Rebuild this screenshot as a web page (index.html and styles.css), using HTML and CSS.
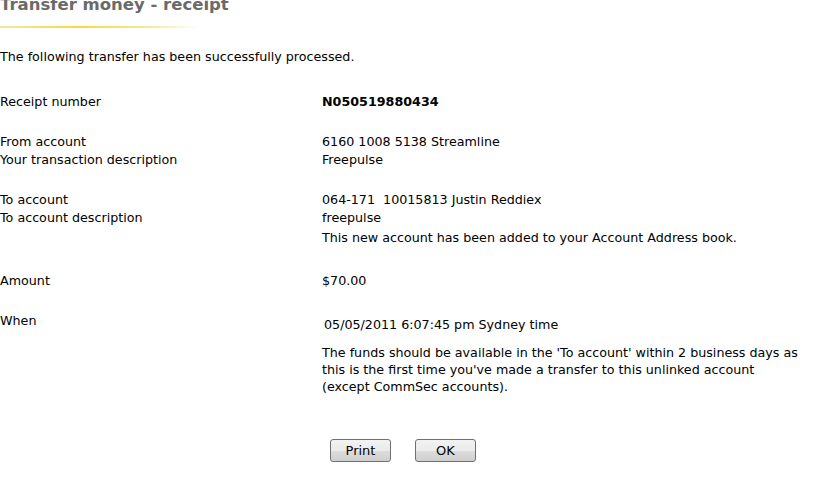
FILE: index.html
```html
<!DOCTYPE html>
<html>
<head>
<meta charset="utf-8">
<link rel="stylesheet" href="styles.css">
</head>
<body>
<div class="page">
  <h1 class="title">Transfer money - receipt</h1>
  <div class="rule"></div>
  <p class="intro">The following transfer has been successfully processed.</p>

  <div class="grid receipt">
    <div class="label">Receipt number</div>
    <div class="value strong">N050519880434</div>
  </div>

  <div class="grid group-from">
    <div class="label">From account</div>
    <div class="value">6160 1008 5138 Streamline</div>
    <div class="label">Your transaction description</div>
    <div class="value">Freepulse</div>
  </div>

  <div class="grid group-to">
    <div class="label">To account</div>
    <div class="value">064-171&nbsp; 10015813 Justin Reddiex</div>
    <div class="label">To account description</div>
    <div class="value">freepulse</div>
    <div class="label"></div>
    <div class="value note">This new account has been added to your Account Address book.</div>
  </div>

  <div class="grid group-amount">
    <div class="label">Amount</div>
    <div class="value">$70.00</div>
  </div>

  <div class="grid group-when">
    <div class="label">When</div>
    <div class="value">
      <div class="date">05/05/2011 6:07:45 pm Sydney time</div>
      <p class="funds">The funds should be available in the 'To account' within 2 business days as this is the first time you've made a transfer to this unlinked account (except CommSec accounts).</p>
    </div>
  </div>

  <div class="actions">
    <button class="btn">Print</button>
    <button class="btn">OK</button>
  </div>
</div>
</body>
</html>
```

FILE: styles.css
```css
html, body {
  margin: 0;
  padding: 0;
  background: #ffffff;
}
body {
  font-family: "DejaVu Sans", Verdana, sans-serif;
  font-size: 12.7px;
  color: #000;
  overflow: hidden;
}
.page {
  width: 820px;
  height: 489px;
  margin-top: -6px;
}
.title {
  margin: 0;
  font-size: 16.5px;
  font-weight: bold;
  color: #6a6a6a;
  line-height: 22px;
  height: 22px;
}
.rule {
  margin-top: 10px;
  width: 200px;
  height: 2px;
  background: linear-gradient(to right, #f3e8a0 0%, #f0dc40 40%, #f5ea9a 75%, #ffffff 100%);
}
.intro {
  margin: 20px 0 0 0;
  line-height: 18px;
}
.grid {
  display: grid;
  grid-template-columns: 322px 1fr;
  line-height: 18px;
}
.receipt { margin-top: 27px; }
.group-from { margin-top: 22px; }
.group-to { margin-top: 22px; }
.group-amount { margin-top: 25px; }
.group-when { margin-top: 22px; }
.strong { font-weight: bold; }
.note { margin-top: 2px; }
.date {
  margin-top: 4px;
  padding-left: 2px;
}
.funds {
  margin: 10px 0 0 0;
  width: 480px;
  line-height: 17px;
}
.actions {
  display: flex;
  gap: 24px;
  margin-top: 44px;
  padding-left: 330px;
}
.btn {
  width: 61px;
  height: 23px;
  font-family: "DejaVu Sans", Verdana, sans-serif;
  font-size: 13px;
  color: #000;
  border: 1px solid #707070;
  border-radius: 3px;
  background: linear-gradient(to bottom, #f2f2f2 0%, #ebebeb 50%, #dddddd 51%, #cfcfcf 100%);
  padding: 0;
}
```
